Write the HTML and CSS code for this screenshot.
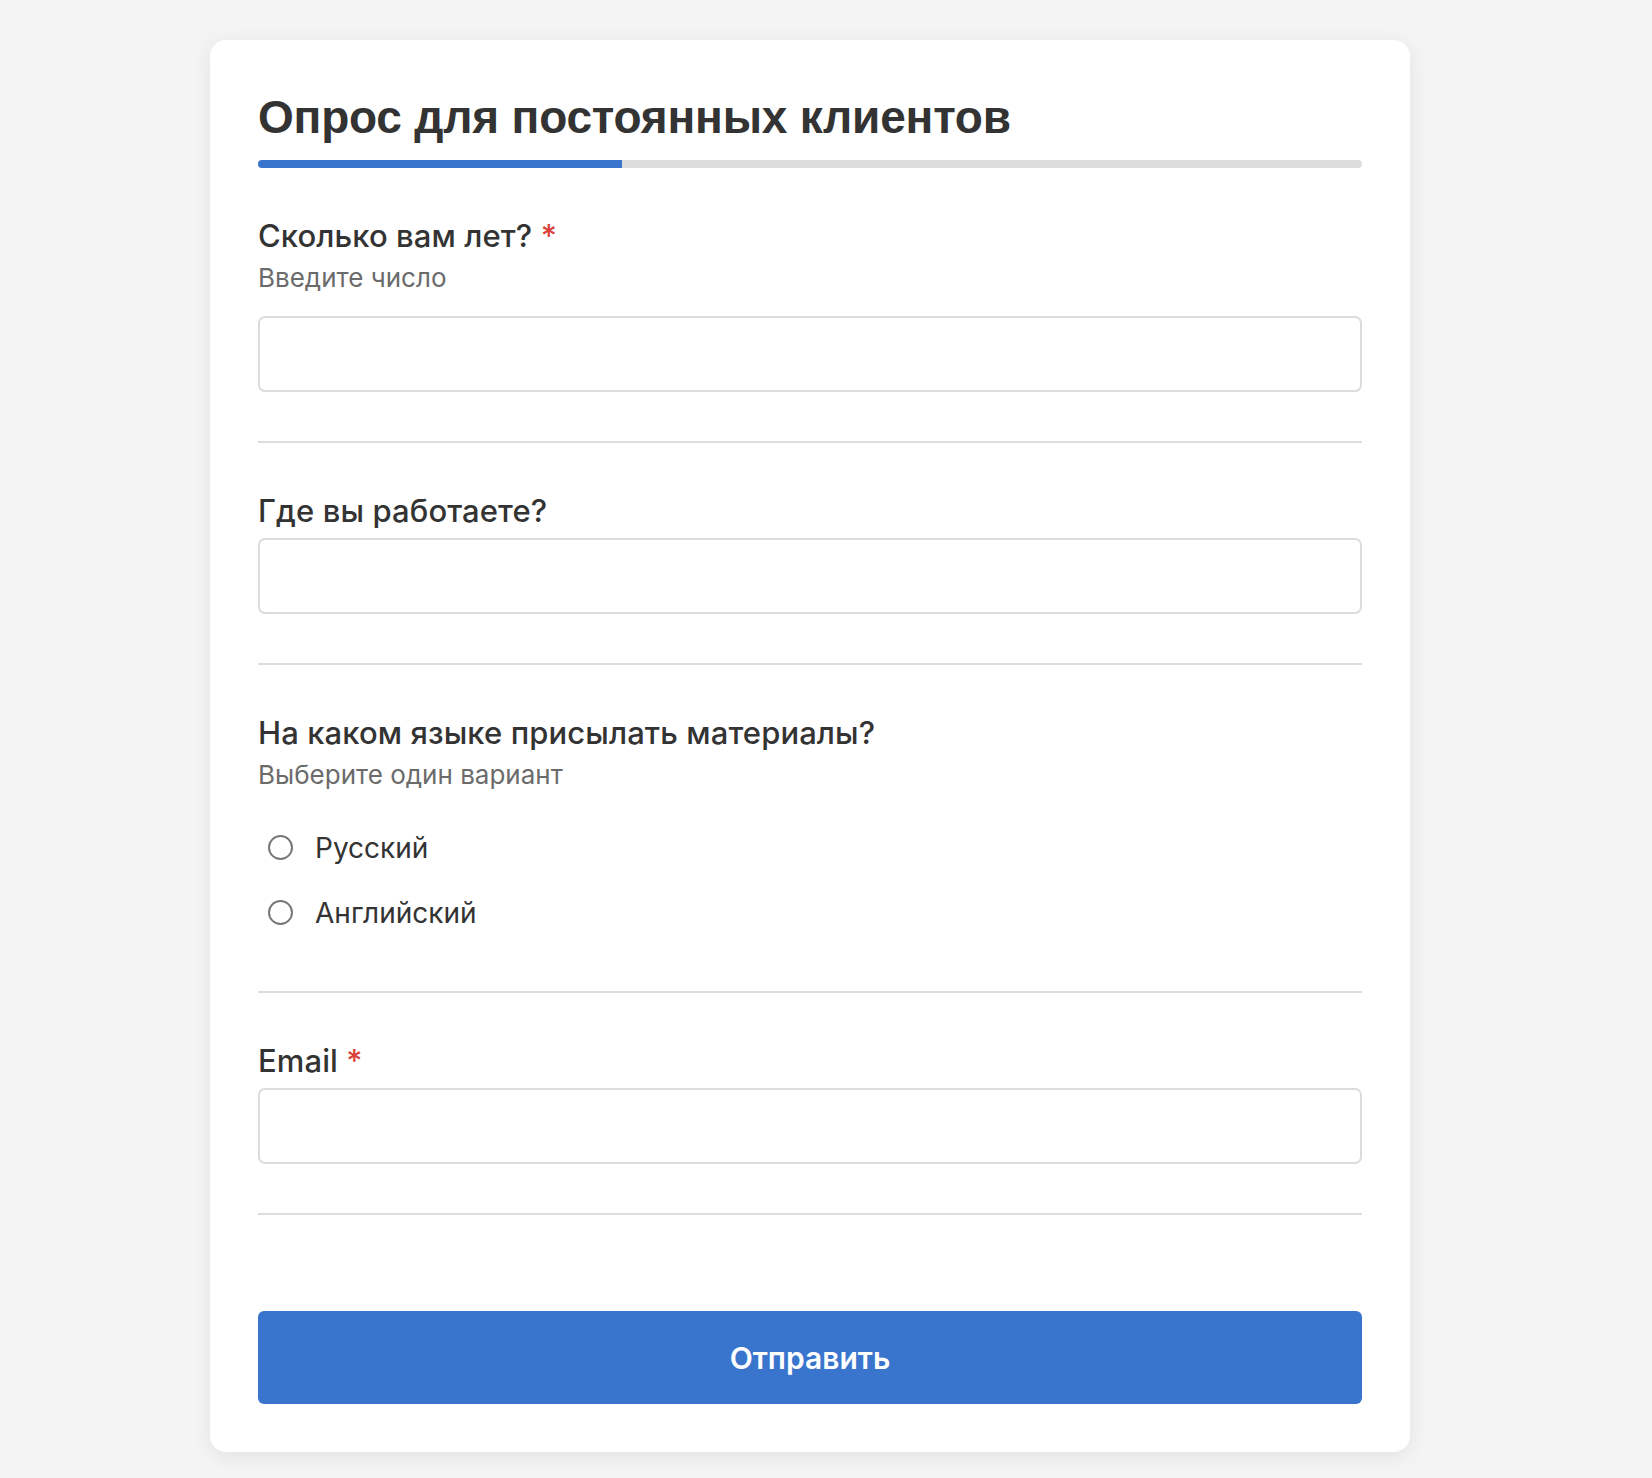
FILE: index.html
```html
<!DOCTYPE html>
<html lang="ru">
<head>
  <meta charset="UTF-8">
  <meta name="viewport" content="width=device-width, initial-scale=1.0">
  <title>Опрос для постоянных клиентов</title>
  <link rel="stylesheet" href="styles.css">
</head>
<body>
  <div class="card">
    <h1>Опрос для постоянных клиентов</h1>
    <div class="progress"><div class="progress-fill" style="width: 33%"></div></div>

    <form>
      <!-- Age -->
      <div class="question">
        <div class="q-head">
          <label class="q-label" for="age">Сколько вам лет? <span class="req">*</span></label>
          <div class="hint">Введите число</div>
        </div>
        <input type="number" id="age" class="field">
      </div>

      <!-- Work -->
      <div class="question">
        <div class="q-head">
          <label class="q-label" for="work">Где вы работаете?</label>
        </div>
        <input type="text" id="work" class="field">
      </div>

      <!-- Language -->
      <div class="question">
        <div class="q-head">
          <div class="q-label">На каком языке присылать материалы?</div>
          <div class="hint">Выберите один вариант</div>
        </div>
        <div class="options">
          <label class="option"><input type="radio" name="lang" value="ru"> Русский</label>
          <label class="option"><input type="radio" name="lang" value="en"> Английский</label>
        </div>
      </div>

      <!-- Email -->
      <div class="question">
        <div class="q-head">
          <label class="q-label" for="email">Email <span class="req">*</span></label>
        </div>
        <input type="email" id="email" class="field">
      </div>

      <button type="submit" class="submit">Отправить</button>
    </form>
  </div>
</body>
</html>
```

FILE: styles.css
```css
body {
  margin: 0;
  padding: 40px 32px 28px 0;
  background-color: #f4f4f4;
  font-family: Inter, "Noto Sans", sans-serif;
  color: #333;
}

.card {
  width: 1200px;
  box-sizing: border-box;
  margin: 0 auto;
  padding: 48px;
  background: #fff;
  border-radius: 16px;
  box-shadow: 0 4px 20px rgba(0, 0, 0, 0.08);
}

h1 {
  margin: 0 0 14px;
  font-family: "Liberation Sans", Arial, sans-serif;
  font-size: 46px;
  line-height: 58px;
  font-weight: bold;
  letter-spacing: -0.2px;
  color: #333;
}

.progress {
  height: 8px;
  border-radius: 4px;
  background: #dddddd;
  overflow: hidden;
  margin-bottom: 50px;
}

.progress-fill {
  height: 100%;
  background: #3975cd;
}

.question {
  padding-bottom: 49px;
  margin-bottom: 50px;
  border-bottom: 2px solid #dddddd;
}

.q-head {
  margin-bottom: 9px;
}

.q-label {
  display: block;
  font-size: 31px;
  line-height: 36px;
  font-weight: 500;
  letter-spacing: 0.1px;
  color: #333;
}

.req {
  color: #d8403a;
}

.hint {
  margin: 8px 0 22px;
  font-size: 26px;
  line-height: 32px;
  color: #6b6b6b;
}

.field {
  display: block;
  width: 100%;
  height: 76px;
  box-sizing: border-box;
  border: 2px solid #dcdcdc;
  border-radius: 7px;
  padding: 0 18px;
  font-family: inherit;
  font-size: 28px;
  color: #333;
  background: #fff;
}

.options {
  padding: 12px 0 7px;
  display: flex;
  flex-direction: column;
  gap: 20px;
}

.option {
  display: flex;
  align-items: center;
  height: 45px;
  font-size: 28px;
  color: #333;
}

.option input {
  appearance: none;
  -webkit-appearance: none;
  width: 25px;
  height: 25px;
  margin: 0 22px 0 10px;
  border: 2px solid #777;
  border-radius: 50%;
  box-sizing: border-box;
  background: #fff;
}

.submit {
  display: block;
  width: 100%;
  height: 93px;
  margin-top: 96px;
  border: none;
  border-radius: 6px;
  background-color: #3975cd;
  color: #fff;
  font-family: inherit;
  font-size: 30px;
  font-weight: 600;
  cursor: pointer;
}
```
